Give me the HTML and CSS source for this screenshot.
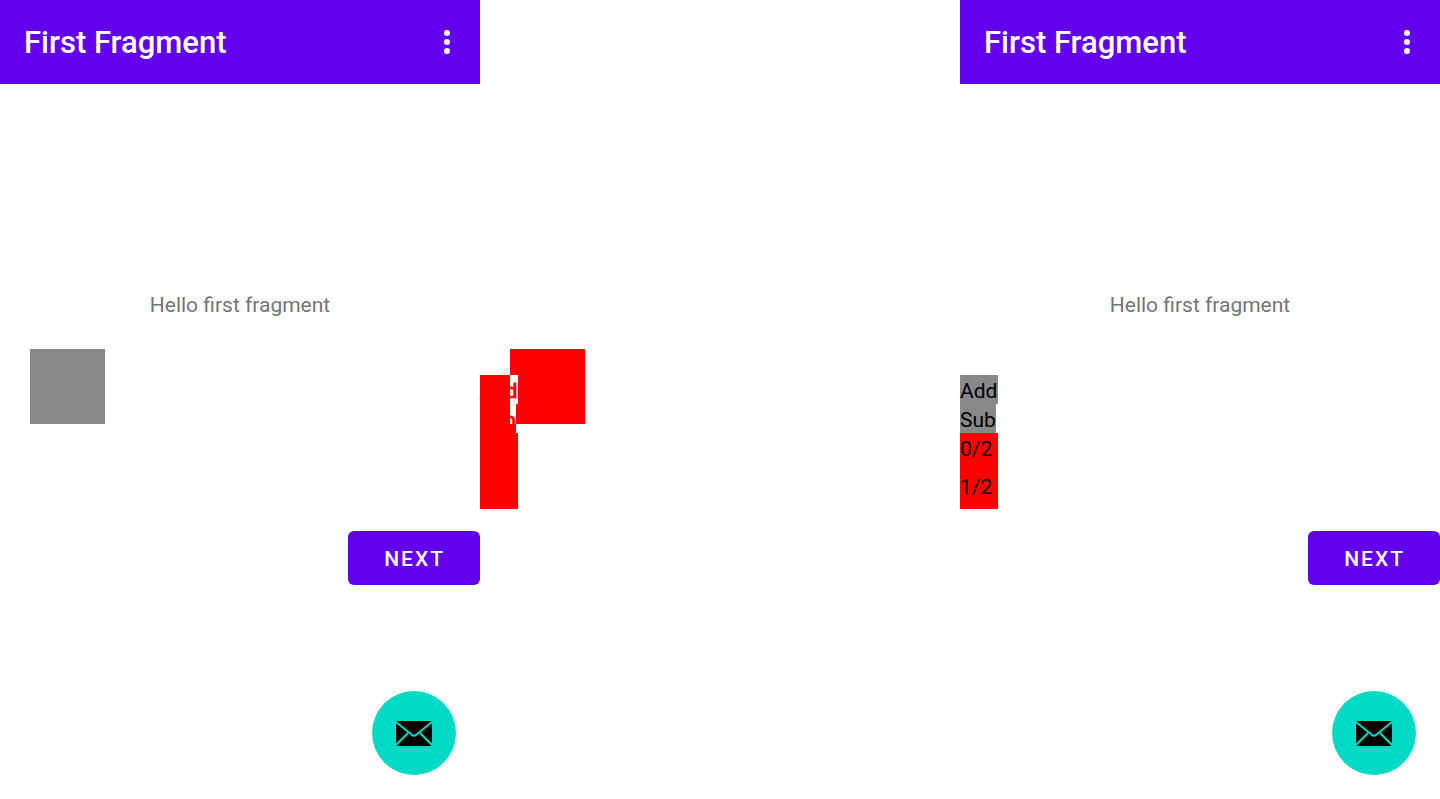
FILE: index.html
```html
<!DOCTYPE html>
<html lang="en">
<head>
<meta charset="utf-8">
<title>First Fragment</title>
<link rel="stylesheet" href="styles.css">
</head>
<body>
<main class="comparison">
  <section class="screen">
    <header class="app-bar">
      <h1 class="title">First Fragment</h1>
      <button class="menu" type="button" aria-label="More options">
        <svg viewBox="0 0 36 36" width="36" height="36" fill="#fff"><circle cx="18" cy="9" r="3"/><circle cx="18" cy="18" r="3"/><circle cx="18" cy="27" r="3"/></svg>
      </button>
    </header>
    <p class="message">Hello first fragment</p>
    <div class="stage">
      <div class="square"></div>
    </div>
    <button class="next" type="button">NEXT</button>
    <button class="fab" type="button" aria-label="Mail">
      <svg viewBox="0 0 36 26" width="36" height="26"><rect y="1" width="36" height="25" rx="2"/><path d="M0 2 L15.500 14.500 Q18 17 20.500 14.500 L36 2 M0 25 L12 13 M36 25 L24 13" fill="none" stroke="#03dac5" stroke-width="2"/></svg>
    </button>
  </section>

  <section class="screen diff">
    <div class="stage">
      <div class="square"></div>
      <ul class="list">
        <li class="label add">Add</li>
        <li class="label sub">Sub</li>
        <li class="row"></li>
        <li class="row"></li>
      </ul>
    </div>
  </section>

  <section class="screen">
    <header class="app-bar">
      <h1 class="title">First Fragment</h1>
      <button class="menu" type="button" aria-label="More options">
        <svg viewBox="0 0 36 36" width="36" height="36" fill="#fff"><circle cx="18" cy="9" r="3"/><circle cx="18" cy="18" r="3"/><circle cx="18" cy="27" r="3"/></svg>
      </button>
    </header>
    <p class="message">Hello first fragment</p>
    <div class="stage">
      <ul class="list">
        <li class="label add">Add</li>
        <li class="label sub">Sub</li>
        <li class="row">0/2</li>
        <li class="row">1/2</li>
      </ul>
    </div>
    <button class="next" type="button">NEXT</button>
    <button class="fab" type="button" aria-label="Mail">
      <svg viewBox="0 0 36 26" width="36" height="26"><rect y="1" width="36" height="25" rx="2"/><path d="M0 2 L15.500 14.500 Q18 17 20.500 14.500 L36 2 M0 25 L12 13 M36 25 L24 13" fill="none" stroke="#03dac5" stroke-width="2"/></svg>
    </button>
  </section>
</main>
</body>
</html>
```

FILE: styles.css
```css
* {
  box-sizing: border-box;
}

body {
  margin: 0;
  background: #fff;
  font-family: Roboto, "Liberation Sans", sans-serif;
  font-size: 21px;
}

button {
  border: 0;
  padding: 0;
  font: inherit;
}

.comparison {
  display: grid;
  grid-template-columns: repeat(3, 1fr);
  min-height: 100vh;
}

.screen {
  position: relative;
  display: flex;
  flex-direction: column;
}

.app-bar {
  display: flex;
  align-items: center;
  justify-content: space-between;
  height: 84px;
  padding: 0 15px 0 24px;
  background: #6200ee;
  color: #fff;
}

.title {
  margin: 0;
  font-size: 31px;
  font-weight: 500;
}

.menu {
  display: flex;
  background: none;
}

.message {
  margin: 207px 0 30px;
  color: #757575;
  line-height: 28px;
  text-align: center;
}

.stage {
  display: grid;
  align-items: start;
  justify-items: start;
  height: 182px;
}

.square {
  grid-area: 1 / 1;
  width: 75px;
  height: 75px;
  margin-left: 30px;
  background: #888;
}

.list {
  grid-area: 1 / 1;
  width: 38px;
  margin: 26px 0 0;
  padding: 0;
  list-style: none;
}

.label {
  padding-top: 4px;
  background: #888;
  line-height: 25px;
}

.add {
  width: 38px;
}

.sub {
  width: 36px;
}

.row {
  height: 38px;
  padding-top: 4px;
  background: #f00;
  line-height: 25px;
}

.next {
  align-self: flex-end;
  padding: 2px 35px 0 36px;
  border-radius: 6px;
  background: #6200ee;
  color: #fff;
  font-weight: 500;
  letter-spacing: 2px;
  line-height: 52px;
}

.fab {
  position: absolute;
  right: 24px;
  bottom: 24px;
  display: flex;
  align-items: center;
  justify-content: center;
  width: 84px;
  height: 84px;
  border-radius: 50%;
  background: #03dac5;
}

.diff {
  padding-top: 349px;
}

.diff .square {
  background: #f00;
}

.diff .label {
  color: #f00;
  -webkit-text-stroke: 1px #f00;
}

.diff .add {
  background: linear-gradient(to right, #f00 30px, #fff 30px);
}

/* Only the part of the label that lies over the square differs in white. */
.diff .sub {
  background: linear-gradient(#fff, #fff) 30px 0 / 6px 20px no-repeat #f00;
}
```
